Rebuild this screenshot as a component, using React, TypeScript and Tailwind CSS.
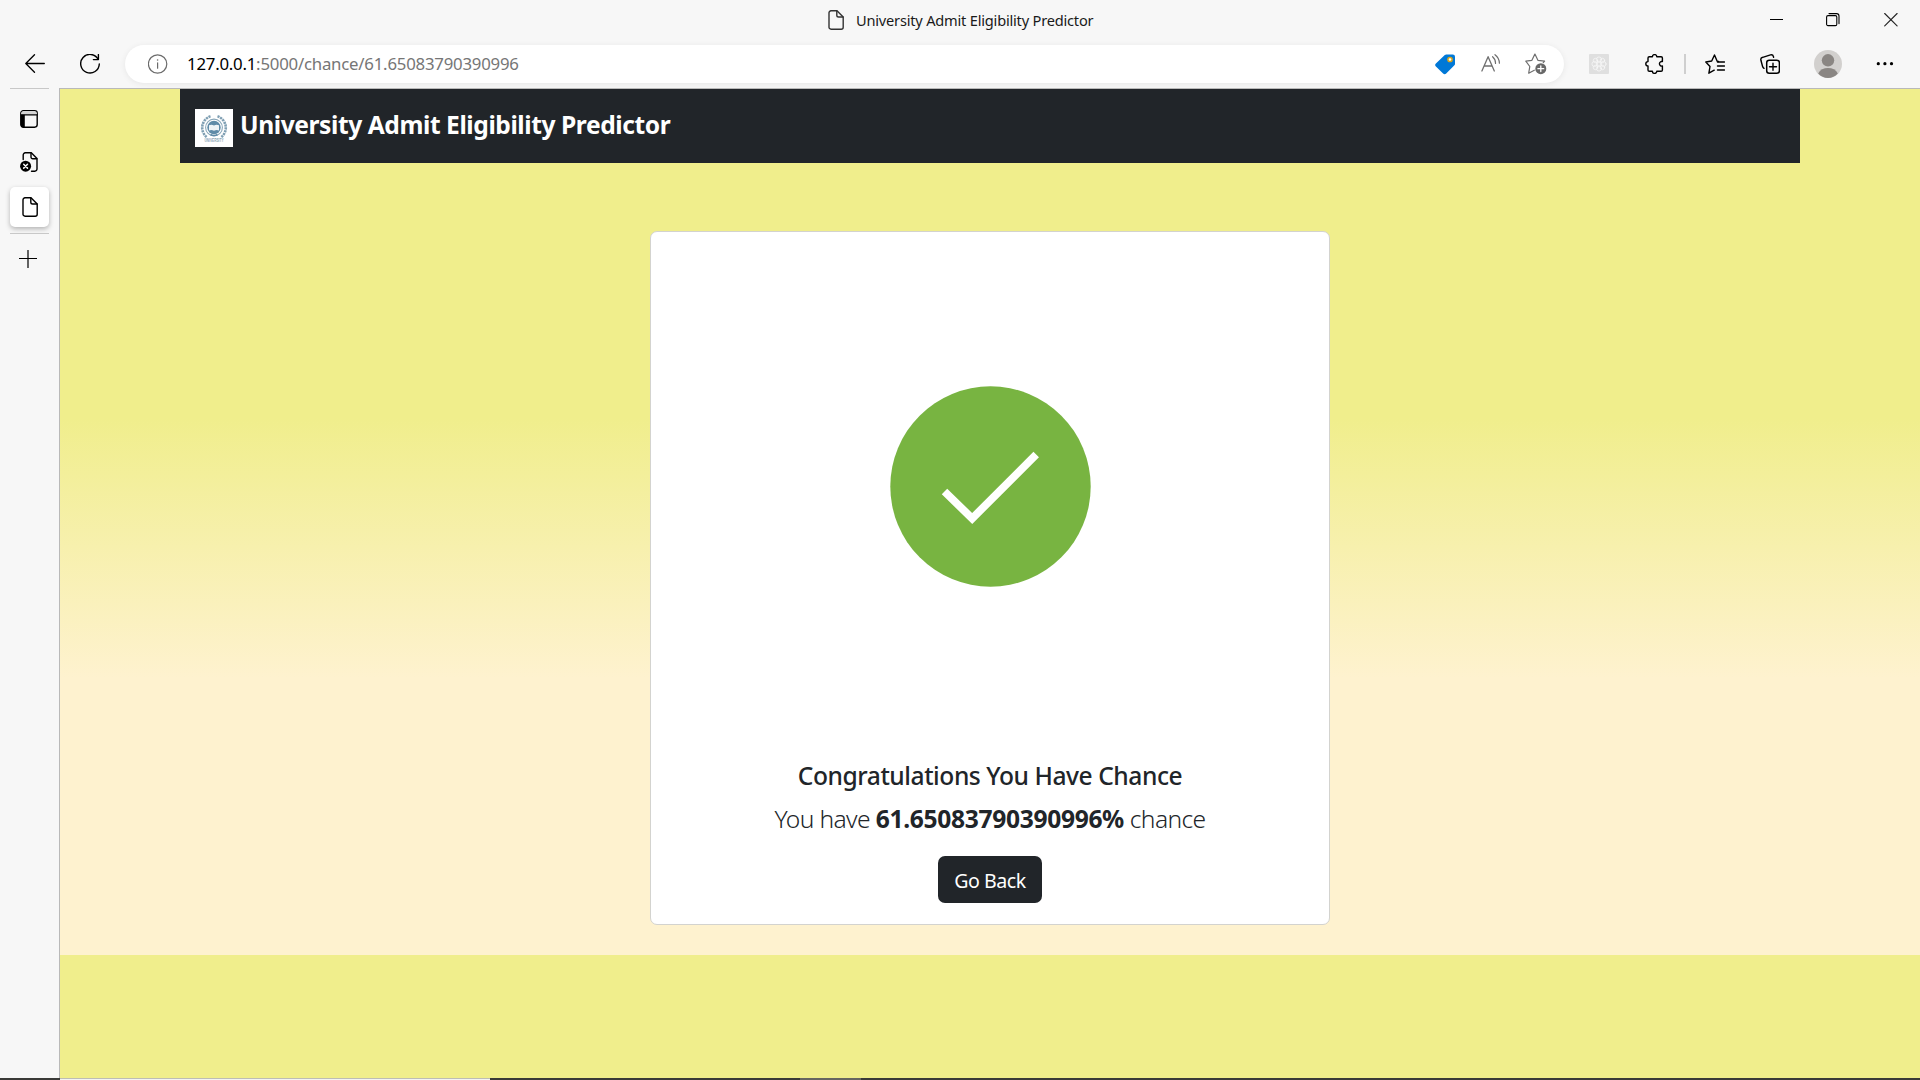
import type { ReactNode } from "react";

type IconProps = { children: ReactNode; w?: number; h?: number; className?: string };

function Icon({ children, w = 20, h = 20, className = "" }: IconProps) {
  return (
    <svg
      width={w}
      height={h}
      viewBox={`0 0 ${w} ${h}`}
      fill="none"
      stroke="currentColor"
      strokeWidth="1.4"
      strokeLinecap="round"
      strokeLinejoin="round"
      className={`block shrink-0 ${className}`}
    >
      {children}
    </svg>
  );
}

function DocIcon({ className = "" }: { className?: string }) {
  return (
    <Icon w={16} className={className}>
      <path d="M3 .8h6L15.2 7v10.2a2 2 0 0 1-2 2H3a2 2 0 0 1-2-2V2.8a2 2 0 0 1 2-2z" />
      <path d="M8.8 1v4.2a1.8 1.8 0 0 0 1.8 1.8H15" />
    </Icon>
  );
}

function TitleBar() {
  return (
    <header className="flex h-10 items-start">
      <DocIcon className="ml-[828px] mt-[10px] text-[#333]" />
      <span className="ml-3 mt-[10px] w-[260px] whitespace-nowrap text-[14.6px] leading-[21px] tracking-[-0.2px] text-[#1a1a1a]">
        University Admit Eligibility Predictor
      </span>
      <Icon w={14} h={14} className="ml-[653px] mt-[13px]">
        <path d="M.5 6.5h13" strokeWidth="1.1" strokeLinecap="butt" shapeRendering="crispEdges" />
      </Icon>
      <Icon w={14} h={14} className="ml-[43px] mt-[13px]">
        <rect x=".6" y="2.6" width="10.2" height="10" rx="1.4" strokeWidth="1.1" />
        <path d="M3 .6h7.6a2.4 2.4 0 0 1 2.4 2.4v7.6" strokeWidth="1.1" />
      </Icon>
      <Icon w={14} h={14} className="ml-[44px] mt-[13px] text-[#222]">
        <path d="M.7.5l12.4 12.4M13.1.5L.7 12.9" strokeWidth="1.1" />
      </Icon>
    </header>
  );
}

function AddressBar() {
  return (
    <div className="ml-[25px] flex h-[38px] w-[1439px] shrink-0 items-center rounded-full bg-white shadow-[0_1px_6px_rgba(0,0,0,0.07)]">
      <Icon w={20} className="ml-[23px] text-[#6b6b6b]">
        <circle cx="9.6" cy="10" r="9.2" strokeWidth="1.2" />
        <path d="M9.6 8.8v5.4" strokeWidth="1.2" />
        <circle cx="9.6" cy="6" r=".8" fill="currentColor" stroke="none" />
      </Icon>
      <span className="ml-[19px] w-[339px] whitespace-nowrap text-[16.8px] leading-[24px] tracking-[-0.22px] text-[#767676]">
        <span className="text-black">127.0.0.1</span>:5000/chance/61.65083790390996
      </span>
      <Icon w={21} h={21} className="ml-[909px]">
        <path
          d="M11.3.5H17.8a2.2 2.2 0 0 1 2.2 2.2v7.2a2 2 0 0 1-.6 1.4l-8.2 8.2a2.2 2.2 0 0 1-3.1 0L.9 12.5a2 2 0 0 1 0-2.9L9.8 1.1a2.2 2.2 0 0 1 1.5-.6z"
          fill="#0078d7"
          stroke="none"
        />
        <circle cx="15" cy="5.5" r="2.1" fill="#fff" stroke="#d9a51a" strokeWidth="1.5" />
      </Icon>
      <Icon w={20} className="ml-[25px] text-[#6f6f6f]">
        <path d="M.9 17L7.1 2.7 13.3 17M3.1 12h8" strokeWidth="1.3" />
        <path d="M11.6 2.7a8.5 8.5 0 0 1 2.9 6.7M14 .7a11 11 0 0 1 4.4 8.5" strokeWidth="1.2" />
      </Icon>
      <Icon w={22} h={22} className="ml-[24px] text-[#6f6f6f]">
        <path d="M9.3 17.2l-5.6 3 1.1-6.7L.8 8.2 6.9 7.3 9.9 1l3 6.3 6.7.9-1.3 1.3" strokeWidth="1.2" />
        <circle cx="15.8" cy="15.7" r="5.5" fill="#686868" stroke="none" />
        <path d="M15.8 12.8v5.8M12.9 15.7h5.8" stroke="#fff" strokeWidth="1.3" />
      </Icon>
    </div>
  );
}

function Toolbar() {
  return (
    <nav className="flex h-12 items-center">
      <Icon className="ml-[25px]">
        <path d="M19.3 9.5H1M9.5.7L.8 9.5l8.7 8.7" strokeWidth="1.3" />
      </Icon>
      <Icon className="ml-[35px]">
        <path d="M18.2 5.3A9.3 9.3 0 1 0 19.3 10" strokeWidth="1.4" />
        <path d="M18.4.6v5h-5" strokeWidth="1.4" />
      </Icon>
      <AddressBar />
      <Icon className="ml-[25px]">
        <rect width="20" height="20" rx="1" fill="#dfdfdf" stroke="none" />
        <g stroke="#f6f6f6" strokeWidth=".8">
          <circle cx="10" cy="10" r="2.2" />
          <circle cx="10" cy="5.5" r="2.6" />
          <circle cx="10" cy="14.5" r="2.6" />
          <circle cx="5.5" cy="10" r="2.6" />
          <circle cx="14.5" cy="10" r="2.6" />
          <circle cx="6.5" cy="6.5" r="2.2" />
          <circle cx="13.5" cy="6.5" r="2.2" />
          <circle cx="6.5" cy="13.5" r="2.2" />
          <circle cx="13.5" cy="13.5" r="2.2" />
        </g>
      </Icon>
      <Icon className="ml-[35px]">
        <path
          d="M5.3 2.8h3.1a2.2 2.2 0 0 1 4.4 0h4.3a1.3 1.3 0 0 1 1.3 1.3v3.5a2.3 2.3 0 1 0 0 4.4v3.9a1.3 1.3 0 0 1-1.3 1.3h-4.3a2.2 2.2 0 0 1-4.4 0H5.3A1.3 1.3 0 0 1 4 15.9V12a2.2 2.2 0 0 1 0-4.4V4.1a1.3 1.3 0 0 1 1.3-1.3z"
          strokeWidth="1.4"
        />
      </Icon>
      <span className="ml-5 h-5 w-[2px] bg-[#cfcfcf]" />
      <Icon className="ml-[19px]">
        <path d="M13.5 7.5l-1.3-.3L9.5 1 6.7 7 .8 8l4.2 4.5-1.1 6.7 5.3-3" strokeWidth="1.4" />
        <path d="M12.5 8h7M12.5 12h7M12.5 16h7" strokeWidth="1.4" />
      </Icon>
      <Icon className="ml-[35px]">
        <rect x="6.7" y="6.2" width="12.7" height="13" rx="2.5" strokeWidth="1.5" />
        <path d="M13 9.3v7M9.5 12.8h7" strokeWidth="1.4" />
        <path
          d="M4 14.3A3 3 0 0 1 2.6 12.5L.9 6.3a2.5 2.5 0 0 1 1.8-3L10.5.9a2.5 2.5 0 0 1 3 1.8l.1.6"
          strokeWidth="1.4"
        />
      </Icon>
      <Icon w={28} h={28} className="ml-[34px]">
        <circle cx="14" cy="14" r="14" fill="#d2d0ce" stroke="none" />
        <circle cx="14" cy="10.3" r="6.2" fill="#8a8683" stroke="none" />
        <path
          d="M4.2 23.5C6 19.8 9.6 18 14 18s8 1.800 9.800 5.500A14 14 0 0 1 14 28a14 14 0 0 1-9.800-4.500z"
          fill="#8a8683"
          stroke="none"
        />
      </Icon>
      <Icon className="ml-[33px]">
        <g fill="currentColor" stroke="none">
          <circle cx="3.3" cy="9.7" r="1.6" />
          <circle cx="9.9" cy="9.7" r="1.6" />
          <circle cx="16.5" cy="9.7" r="1.6" />
        </g>
      </Icon>
    </nav>
  );
}

function TabRail() {
  return (
    <aside className="flex w-[60px] shrink-0 flex-col border-r border-[#b9b9b9] pl-[10px]">
      <span className="h-px w-[39px] bg-[#c8c8c8]" />
      <Icon w={18} h={18} className="ml-[10px] mt-[21px]">
        <rect x=".8" y=".8" width="16.4" height="16.4" rx="2.6" />
        <path d="M1 3.4A2.5 2.5 0 0 1 3.4 1h11.2A2.5 2.5 0 0 1 17 3.4v1.2H1z" fill="#d5d5d5" stroke="none" />
        <path d="M1.5 4.800H17" strokeWidth="1.2" />
        <path d="M.8 4.8h4v12.4H3.4A2.6 2.6 0 0 1 .8 14.6z" fill="currentColor" stroke="none" />
      </Icon>
      <Icon w={18} className="ml-[10px] mt-6">
        <path d="M3.2 7.5V2.9A2.1 2.1 0 0 1 5.3.8h6L17 6.5v10.6a2.1 2.1 0 0 1-2.1 2.1h-3.4" />
        <path d="M11 1v4a1.7 1.7 0 0 0 1.7 1.7h4.1" />
        <circle cx="5.6" cy="14.2" r="5.5" fill="currentColor" stroke="none" />
        <path d="M3.7 12.3l3.8 3.8M7.5 12.3l-3.8 3.8" stroke="#f7f7f7" strokeWidth="1.5" />
      </Icon>
      <div className="mt-[15px] flex h-10 w-[39px] items-center rounded-[5px] bg-white pl-[12px] shadow-[0_2px_5px_rgba(0,0,0,0.28)]">
        <DocIcon />
      </div>
      <span className="mt-[6px] h-px w-[39px] bg-[#c8c8c8]" />
      <Icon w={18} h={18} className="ml-[9px] mt-[16px]">
        <path d="M9 .3v17.4M.3 8.5h17.4" strokeWidth="1.2" />
      </Icon>
    </aside>
  );
}

function Crest() {
  return (
    <svg width="38" height="38" viewBox="0 0 38 38" className="block shrink-0 bg-white" fill="none">
      <path
        d="M15.5 7.3A12 12 0 0 0 12 28.3M22.5 7.3A12 12 0 0 1 26 28.3"
        stroke="#7f9fb3"
        strokeWidth="2.6"
        strokeDasharray="2.2 .7"
      />
      <circle cx="19" cy="18.5" r="8.4" stroke="#8aa7b9" strokeWidth="1.1" />
      <circle cx="19" cy="18.5" r="6.7" fill="#5f8ba8" />
      <path d="M14 16.2q2.7-1.3 5 .4 2.3-1.7 5-.4v5.2q-2.7-1-5 .4-2.3-1.4-5-.4z" fill="#eef3f6" />
      <path d="M15.5 25.5q3.5 2 7 0" stroke="#5f8ba8" strokeWidth="1.5" />
      <text
        x="19"
        y="32.8"
        textAnchor="middle"
        fontSize="4.8"
        fontWeight="700"
        textLength="19"
        lengthAdjust="spacingAndGlyphs"
        fill="#8aa5b6"
        fontFamily="Liberation Sans, sans-serif"
      >
        UNIVERSITY
      </text>
    </svg>
  );
}

function ResultCard() {
  return (
    <section className="mx-auto mt-[68px] flex h-[694px] w-[680px] flex-col items-center rounded-[7px] border border-[#d3d3cf] bg-white text-[#212529]">
      <svg width="201" height="201" viewBox="0 0 201 201" className="mt-[154px] block shrink-0">
        <circle cx="100.5" cy="100.5" r="100.2" fill="#78b441" />
        <path d="M54.5 105.5L82.2 132.5 146.2 68.5" fill="none" stroke="#fff" strokeWidth="7.8" />
      </svg>
      <h5 className="mt-[174px] text-[24.6px] font-medium leading-[30px] tracking-[-0.45px]">
        Congratulations You Have Chance
      </h5>
      <p className="mt-[9px] whitespace-nowrap text-[24.6px] font-light leading-[38px] tracking-[-0.62px]">
        You have <b className="font-bold tracking-[-0.33px]">61.65083790390996%</b> chance
      </p>
      <button className="mt-[18px] h-[47px] w-[104px] rounded-[7px] bg-[#212529] pt-[3px] text-[19.6px] leading-[30px] tracking-[-0.45px] text-white">
        Go Back
      </button>
    </section>
  );
}

function Page() {
  return (
    <main className="flex-1 border-t border-[#b9b9b9] bg-[#f0ee8c]">
      <div className="h-[866px] bg-[linear-gradient(180deg,#f0ee8c_38%,#fef2cf_68%)]">
        <div className="mx-[120px] flex h-[74px] bg-[#212529] pl-[15px] pt-5">
          <Crest />
          <h1 className="ml-[7px] -mt-[1px] whitespace-nowrap text-[24.6px] font-bold leading-[34px] tracking-[-0.43px] text-white">
            University Admit Eligibility Predictor
          </h1>
        </div>
        <ResultCard />
      </div>
    </main>
  );
}

function TaskbarEdge() {
  return (
    <footer className="flex h-[2px] bg-[#3a3a38]">
      <span className="ml-[60px] h-[2px] w-[430px] border-t border-[#bdbdb5] bg-[#f4f4f2]" />
      <span className="ml-[310px] h-[2px] w-[61px] bg-[#666660]" />
    </footer>
  );
}

export default function App() {
  return (
    <div className="flex h-[1080px] w-[1920px] flex-col overflow-hidden bg-[#f7f7f7] font-['Noto_Sans',sans-serif] text-black">
      <TitleBar />
      <Toolbar />
      <div className="flex h-[990px]">
        <TabRail />
        <Page />
      </div>
      <TaskbarEdge />
    </div>
  );
}
